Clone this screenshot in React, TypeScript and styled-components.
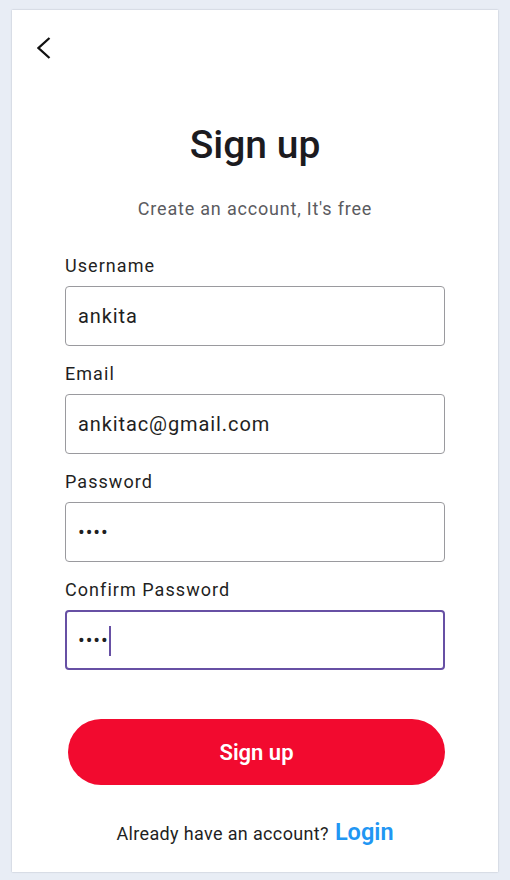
import React from "react";
import styled, { createGlobalStyle } from "styled-components";

const Global = createGlobalStyle`
  html, body { margin: 0; padding: 0; }
  body {
    background: #e8edf5;
    font-family: Roboto, "Noto Sans", "Liberation Sans", sans-serif;
    -webkit-font-smoothing: antialiased;
  }
  * { box-sizing: border-box; }
`;

const Page = styled.div`
  padding: 10px 12px 8px 12px;
`;

const Card = styled.main`
  width: 486px;
  height: 862px;
  background: #ffffff;
  box-shadow: 0 0 1.5px rgba(60, 70, 90, 0.35);
  display: flex;
  flex-direction: column;
`;

const TopBar = styled.div`
  height: 60px;
  padding: 27px 0 0 25px;
`;

const BackButton = styled.button`
  width: 14px;
  height: 22px;
  padding: 0;
  border: 0;
  background: none;
  cursor: pointer;
  display: block;
  svg { display: block; }
`;

const Title = styled.h1`
  margin: 51px 0 0 0;
  text-align: center;
  font-size: 39px;
  line-height: 48px;
  font-weight: 500;
  color: #1c1b1f;
`;

const Subtitle = styled.p`
  margin: 28px 0 0 0;
  text-align: center;
  font-size: 18px;
  line-height: 24px;
  letter-spacing: 0.8px;
  color: #5b5b5f;
`;

const Form = styled.form`
  margin: 33px 0 0 0;
  padding: 0 53px;
  display: flex;
  flex-direction: column;
  gap: 16px;
`;

const FieldGroup = styled.label`
  display: flex;
  flex-direction: column;
  gap: 8px;
`;

const LabelText = styled.span`
  font-size: 18px;
  line-height: 24px;
  letter-spacing: 1.05px;
  color: #1f1f23;
`;

const InputWrap = styled.div`
  position: relative;
`;

const Input = styled.input<{ $focused?: boolean }>`
  display: block;
  width: 100%;
  height: 60px;
  margin: 0;
  border-radius: 4px;
  border: ${(p) => (p.$focused ? "2px solid #6750a4" : "1px solid #9a9a9e")};
  padding: 0 ${(p) => (p.$focused ? "11px" : "12px")};
  font-family: Roboto, "Noto Sans", sans-serif;
  font-size: 20px;
  letter-spacing: 0.9px;
  color: #1f1f23;
  background: #fff;
  outline: none;
`;

const Caret = styled.span`
  position: absolute;
  left: 44px;
  top: 16px;
  width: 2px;
  height: 30px;
  background: #6750a4;
`;

const SubmitButton = styled.button`
  margin: 49px 0 0 56px;
  width: 377px;
  height: 66px;
  border: 0;
  border-radius: 33px;
  background: #f20a2f;
  color: #ffffff;
  font-family: Roboto, "Noto Sans", sans-serif;
  font-size: 22px;
  font-weight: 600;
  cursor: pointer;
`;

const Footer = styled.p`
  margin: 34px 0 0 0;
  text-align: center;
  font-size: 18px;
  line-height: 26px;
  letter-spacing: 0.35px;
  color: #1f1f23;
`;

const LoginLink = styled.a`
  margin-left: 6px;
  font-size: 23.5px;
  font-weight: 600;
  letter-spacing: 0;
  color: #2196f3;
  text-decoration: none;
`;

type FieldProps = {
  label: string;
  value: string;
  type?: string;
  focused?: boolean;
};

function Field({ label, value, type = "text", focused }: FieldProps) {
  return (
    <FieldGroup>
      <LabelText>{label}</LabelText>
      <InputWrap>
        <Input type={type} value={value} readOnly $focused={focused} />
        {focused && <Caret />}
      </InputWrap>
    </FieldGroup>
  );
}

export default function App() {
  return (
    <Page>
      <Global />
      <Card>
        <TopBar>
          <BackButton aria-label="Back">
            <svg width="14" height="22" viewBox="0 0 14 22">
              <polyline
                points="12.5,1 1.5,11 12.5,21"
                fill="none"
                stroke="#111"
                strokeWidth="2.3"
              />
            </svg>
          </BackButton>
        </TopBar>
        <Title>Sign up</Title>
        <Subtitle>Create an account, It's free</Subtitle>
        <Form onSubmit={(e) => e.preventDefault()}>
          <Field label="Username" value="ankita" />
          <Field label="Email" value="ankitac@gmail.com" />
          <Field label="Password" value="1234" type="password" />
          <Field label="Confirm Password" value="1234" type="password" focused />
        </Form>
        <SubmitButton type="button">Sign up</SubmitButton>
        <Footer>
          Already have an account?
          <LoginLink href="#">Login</LoginLink>
        </Footer>
      </Card>
    </Page>
  );
}
